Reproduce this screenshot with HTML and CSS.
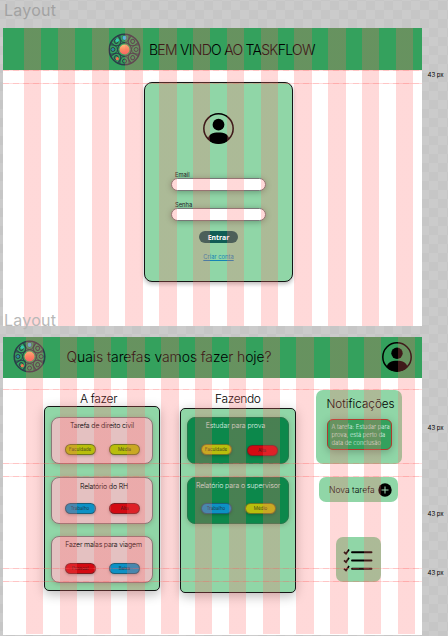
FILE: index.html
```
<!DOCTYPE html>
<html lang="pt-BR">
<head>
<meta charset="utf-8">
<title>Taskflow</title>
<link rel="stylesheet" href="styles.css">
</head>
<body>
<svg class="defs" aria-hidden="true">
  <defs>
    <linearGradient id="sun" x1="0" y1="0" x2="0" y2="1"><stop offset="0" stop-color="#ffbd7a"/><stop offset=".5" stop-color="#fb8a62"/><stop offset="1" stop-color="#f56464"/></linearGradient>
    <g id="knob"><path d="M-4.800 -14.700Q-4.600 -7 0 -7T4.800 -14.700" /><circle cy="-11.600" r="2"/></g>
    <symbol id="logo" viewBox="-16.5 -16.5 33 33">
      <g fill="none" stroke="#2c3d4a" stroke-width="1">
        <circle r="15.300" stroke-width="1.500"/>
        <circle r="6.800" stroke-width="1"/>
        <use href="#knob"/><use href="#knob" transform="rotate(45)"/><use href="#knob" transform="rotate(90)"/><use href="#knob" transform="rotate(135)"/>
        <use href="#knob" transform="rotate(180)"/><use href="#knob" transform="rotate(225)"/><use href="#knob" transform="rotate(270)"/><use href="#knob" transform="rotate(315)"/>
      </g>
      <circle r="5" fill="url(#sun)"/>
      <circle cy="-11.600" r="2.100" fill="#50b9dc"/><circle cx="-7.200" cy="-9.200" r="1.700" fill="#35c9b0"/>
      <circle cx="-11.600" r="1.200" fill="#2f7fb0"/><circle cx="-7.200" cy="9.200" r="1.600" fill="#f0764f"/>
    </symbol>
    <symbol id="user" viewBox="0 0 30 30">
      <clipPath id="ring"><circle cx="15" cy="15" r="14.5"/></clipPath>
      <circle cx="15" cy="15" r="14.2" fill="none" stroke="#000" stroke-width="1.5"/>
      <circle cx="15" cy="11.3" r="5.7"/>
      <path d="M4.500 26C5 20.500 9.500 18.800 15 18.800S25 20.500 25.500 26L22 32H8z" clip-path="url(#ring)"/>
    </symbol>
  </defs>
</svg>

<main class="canvas">
  <div class="label">Layout</div>

  <section class="frame login">
    <header class="bar">
      <svg class="logo"><use href="#logo"/></svg>
      <h1 class="welcome">BEM VINDO AO TASKFLOW</h1>
    </header>
    <form class="login-card">
      <svg class="avatar"><use href="#user"/></svg>
      <label class="field">Email<span class="input"></span></label>
      <label class="field">Senha<span class="input"></span></label>
      <span class="enter">Entrar</span>
      <a class="create">Criar conta</a>
    </form>
    <div class="columns"></div>
    <i class="guide g-bar"></i><i class="guide g-card"></i>
    <span class="measure m-login">43 px</span>
    <div class="label label-over">Layout</div>
  </section>

  <section class="frame board">
    <header class="bar">
      <svg class="logo"><use href="#logo"/></svg>
      <h1 class="question">Quais tarefas vamos fazer hoje?</h1>
      <svg class="avatar"><use href="#user"/></svg>
    </header>
    <div class="content">
      <section class="list todo">
        <h2>A fazer</h2>
        <div class="panel">
          <article class="card"><h3 class="t1">Tarefa de direito civil</h3><div class="tags"><span class="tag yellow">Faculdade</span><span class="tag yellow">Média</span></div></article>
          <article class="card"><h3 class="t2">Relatório do RH</h3><div class="tags"><span class="tag blue">Trabalho</span><span class="tag red">Alta</span></div></article>
          <article class="card"><h3 class="t3">Fazer malas para viagem</h3><div class="tags"><span class="tag red">Pessoal</span><span class="tag blue">Baixa</span></div></article>
        </div>
      </section>
      <section class="list doing">
        <h2>Fazendo</h2>
        <div class="panel">
          <article class="card"><h3 class="t4">Estudar para prova</h3><div class="tags"><span class="tag yellow">Faculdade</span><span class="tag red low">Alta</span></div></article>
          <article class="card"><h3 class="t5">Relatório para o supervisor</h3><div class="tags"><span class="tag blue">Trabalho</span><span class="tag yellow">Médio</span></div></article>
        </div>
      </section>
      <aside class="side">
        <section class="notices">
          <h2>Notificações</h2>
          <p>A tarefa: Estudar para<br>prova, está perto da<br>data de conclusão</p>
        </section>
        <div class="new-task"><span>Nova tarefa</span>
          <svg viewBox="0 0 14 14"><circle cx="7" cy="7" r="6.700"/><path d="M7 3.500v7M3.500 7h7" stroke="#a3dcb6" stroke-width="1"/></svg>
        </div>
        <div class="tasks">
          <svg viewBox="0 0 30 24" fill="none" stroke="#000">
            <path d="M9 4.200h19.500M9 12.500h19.500M9 20.800h19.500" stroke-width="1.900" stroke-linecap="round"/>
            <path d="M1 4l2 1.800L6 1.500M1 12.300l2 1.800L6 9.800M1 20.600l2 1.800L6 18.100" stroke-width="1.700"/>
          </svg>
        </div>
      </aside>
    </div>
    <div class="columns"></div>
    <i class="guide b1"></i><i class="guide b2"></i><i class="guide b3"></i><i class="guide b4"></i><i class="guide b5"></i>
    <span class="measure m1">43 px</span><span class="measure m2">43 px</span><span class="measure m3">43 px</span>
  </section>
</main>
</body>
</html>
```

FILE: styles.css
```
* { box-sizing: border-box; margin: 0; padding: 0; }
body {
  width: 448px; height: 636px; overflow: hidden;
  font-family: Inter, "Liberation Sans", sans-serif; font-weight: 300; color: #000;
  background: repeating-conic-gradient(#cbcbcb 0 25%, #c6c6c6 0 50%) 6px 1px / 18px 18px;
}
.defs { position: absolute; width: 0; height: 0; }
.canvas { padding-left: 3px; }
.label { height: 28px; padding-left: 1px; font: 400 16px/20px Inter, sans-serif; letter-spacing: .25px; color: #a2a2a2; }
.label-over { position: absolute; left: 0; top: 282px; color: #b8b8b8; }

.frame { position: relative; width: 419px; background: #fff; }
.login { height: 298px; margin-bottom: 11px; }
.board { height: 298px; }
.bar { display: flex; align-items: center; background: #34a15d; }
.login .bar { height: 42px; padding-left: 104.500px; gap: 8.500px; }
.board .bar { height: 41px; padding: 0 10px 2px 9.500px; }
.logo { width: 33px; height: 33px; flex: none; }
.avatar { width: 30px; height: 30px; flex: none; }
.bar h1 { font-weight: 300; font-size: 14px; white-space: nowrap; }
.bar .welcome { letter-spacing: -.72px; }
.bar .question { margin-left: 21px; flex: 1; letter-spacing: -.1px; }

.columns {
  position: absolute; inset: 0 6.500px 0 21.300px; pointer-events: none;
  background: repeating-linear-gradient(90deg, rgba(255,103,103,.25) 0 17.400px, transparent 17.400px 33.790px);
}
.board .columns { left: 23px; right: 5px; bottom: 1px; }
.guide { position: absolute; left: 0; right: 0; height: 1px; background: repeating-linear-gradient(90deg, rgba(255,90,90,.35) 0 6px, rgba(255,90,90,.2) 6px 10px); }
.g-bar { top: 42px; } .g-card { top: 54.500px; }
.b1 { top: 52px; } .b2 { top: 126px; } .b3 { top: 139px; } .b4 { top: 231px; } .b5 { top: 244px; }
.measure { position: absolute; left: 424.500px; font-size: 6.200px; line-height: 8px; font-weight: 400; letter-spacing: -.1px; white-space: nowrap; }
.m-login { top: 43px; } .m1 { top: 87px; } .m2 { top: 173px; } .m3 { top: 232px; }

.login-card {
  width: 149px; height: 200px; margin: 12px 0 0 141px; padding-top: 29.500px;
  display: flex; flex-direction: column; align-items: center;
  background: #90d6a7; border: 1px solid #151515; border-radius: 8px;
  box-shadow: 0 2px 4px rgba(0,0,0,.28);
}
.login-card .avatar { width: 31px; height: 31px; margin-bottom: 27px; }
.field { width: 95px; height: 30px; font-size: 5.800px; line-height: 8px; font-weight: 400; text-indent: 4px; color: #222; }
.input { display: block; height: 13px; margin-top: -1px; border-radius: 7px; background: #fff; border: 1px solid #777; box-shadow: 0 1px 6px rgba(0,0,0,.3); }
.enter { width: 39px; height: 12px; border-radius: 6px; background: #105d55; color: #fff; font: 700 6.900px/13px "Noto Sans", sans-serif; text-align: center; }
.create { margin-top: 9px; font-size: 5.800px; line-height: 9px; font-weight: 400; color: #1684b5; text-decoration: underline; }

.content { display: flex; padding-top: 12px; }
.list { flex: none; }
.list h2 { font-weight: 300; font-size: 12px; line-height: 17px; letter-spacing: -.35px; white-space: nowrap; }
.todo { width: 116px; margin-left: 41px; }
.doing { width: 116px; margin-left: 20px; }
.todo h2 { padding-left: 36px; }
.doing h2 { padding-left: 35px; }
.todo .panel { margin-top: -1px; }
.doing .panel { margin-top: 1px; }
.panel {
  height: 185px; padding: 10.300px 6px 0; display: flex; flex-direction: column; gap: 12.500px;
  background: #90d6a7; border: 1px solid #151515; border-radius: 5px; box-shadow: 0 3px 12px rgba(0,0,0,.28);
}
.doing .panel { padding-top: 8.300px; }
.card { flex: none; height: 47px; padding-top: 2px; border: 1px solid #8b7878; border-radius: 8px; background: #e4c1c1; box-shadow: 0 1px 5px rgba(80,0,0,.2); }
.doing .card { background: #0c884b; border-color: #27794d; color: #dcefe3; }
.card h3 { font-size: 7px; line-height: 11px; font-weight: 300; text-align: center; white-space: nowrap; }
.card .t1 { letter-spacing: -.15px; }
.card .t2 { padding: 1px 0 0 4px; margin-bottom: -1px; letter-spacing: -.15px; }
.card .t3 { padding-left: 3px; letter-spacing: -.2px; }
.card .t4 { padding-right: 5px; letter-spacing: -.1px; }
.card .t5 { letter-spacing: -.12px; }
.tags { display: flex; gap: 13.500px; padding: 12.500px 0 0 12.500px; }
.tag { width: 31px; height: 11px; border: 1px solid rgba(40,50,50,.5); border-radius: 6px; font-size: 4.600px; line-height: 9px; text-align: center; color: #222; box-shadow: 0 1px 3px rgba(0,0,0,.25); }
.tag.yellow { background: #b8be0c; } .tag.blue { background: #0c91c5; } .tag.red { background: #d30a12; }
.tag.low { margin: 1px 0 -1px 1.500px; }

.side { width: 90px; margin-left: 20px; display: flex; flex-direction: column; }
.notices { width: 86px; height: 74px; padding: 5px 10px 0 10.500px; border-radius: 7px; background: #90d6a7; }
.notices h2 { font-size: 11.700px; line-height: 18px; font-weight: 300; white-space: nowrap; }
.notices p { width: 65px; height: 31px; margin-top: 6px; padding: 2.500px 0 0 4px; border: 1px solid #b03a2c; border-radius: 6px; background: #34a15d; color: #dff2e6; font-size: 5.800px; line-height: 8px; white-space: nowrap; box-shadow: 0 2px 8px rgba(0,0,0,.25); }
.new-task { width: 79px; height: 25px; margin: 13px 0 0 3px; padding: 1px 6px 0 10px; display: flex; align-items: center; justify-content: space-between; border-radius: 7px; background: #90d6a7; font-size: 8.500px; white-space: nowrap; }
.new-task svg { width: 14px; height: 14px; flex: none; }
.tasks { width: 45px; height: 45px; margin: 35px 0 0 20px; padding: 11px 0 0 7px; border-radius: 7px; background: #90d6a7; }
.tasks svg { display: block; width: 30px; height: 24px; }
```
